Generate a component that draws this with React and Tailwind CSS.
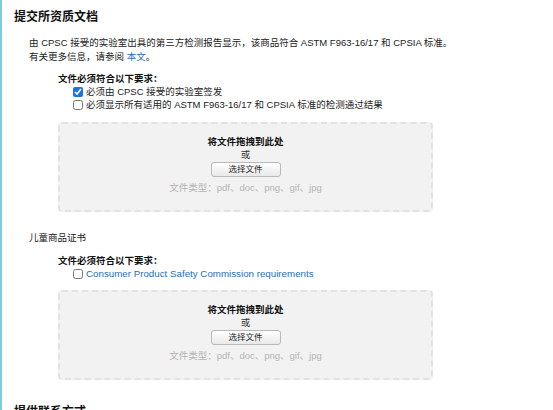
import React from 'react';

const fontStack = { fontFamily: '"Liberation Sans", "Noto Sans CJK SC", sans-serif' };

const Dropzone = ({ className = '' }) => (
    <div className={`w-[375px] h-[90px] bg-[#f2f2f2] border-2 border-dashed border-[#e2e2e2] rounded-[4px] flex flex-col items-center pt-[11px] ${className}`}>
        <div className="text-[9.5px] leading-[13px] font-bold text-[#111]">将文件拖拽到此处</div>
        <div className="text-[9.5px] leading-[13px] text-[#333]">或</div>
        <button className="mt-px w-[70px] h-[15px] text-[8.5px] leading-[13px] text-[#222] rounded-[3px] border border-[#b9b9b9] bg-gradient-to-b from-white to-[#e9e9e9]">
            选择文件
        </button>
        <div className="mt-[4px] text-[9.5px] leading-[13px] text-[#b4b4b4]">文件类型：pdf、doc、png、gif、jpg</div>
    </div>
);

const Check = ({ checked, children, link }) => (
    <label className="flex items-center pl-[15px] text-[9.5px] leading-[13px]">
        <input
            type="checkbox"
            defaultChecked={checked}
            className="w-[10px] h-[10px] m-0 mr-[3px] accent-[#1a73e8]"
        />
        <span className={link ? 'text-[#2a6ebb] text-[9.75px]' : 'text-[#222]'}>{children}</span>
    </label>
);

export default function App() {
    return (
        <div className="w-[553px] h-[410px] overflow-hidden bg-white border-l-2 border-[#7ecbe2]" style={fontStack}>
            {/* Header */}
            <h2 className="mt-[9px] pl-[12px] text-[12px] leading-[16px] font-bold text-[#111]">提交所资质文档</h2>

            <p className="mt-[11px] pl-[27px] text-[9.5px] leading-[14px] text-[#222]">
                由 CPSC 接受的实验室出具的第三方检测报告显示，该商品符合 ASTM F963-16/17 和 CPSIA 标准。
                <br />
                有关更多信息，请参阅 <span className="text-[#2a6ebb]">本文</span>。
            </p>

            {/* Lab report */}
            <div className="ml-[56px] mt-[8px]">
                <div className="text-[9.5px] leading-[13px] font-bold text-[#111]">文件必须符合以下要求：</div>
                <Check checked>必须由 CPSC 接受的实验室签发</Check>
                <Check>必须显示所有适用的 ASTM F963-16/17 和 CPSIA 标准的检测通过结果</Check>
                <Dropzone className="mt-[11px]" />
            </div>

            {/* Children's product certificate */}
            <div className="mt-[19px] pl-[27px] text-[9.5px] leading-[13px] text-[#222]">儿童商品证书</div>
            <div className="ml-[56px] mt-[10px]">
                <div className="text-[9.5px] leading-[13px] font-bold text-[#111]">文件必须符合以下要求：</div>
                <Check link>Consumer Product Safety Commission requirements</Check>
                <Dropzone className="mt-[10px]" />
            </div>

            <h2 className="mt-[24px] pl-[12px] text-[12px] leading-[16px] font-bold text-[#111]">提供联系方式</h2>
        </div>
    );
}
